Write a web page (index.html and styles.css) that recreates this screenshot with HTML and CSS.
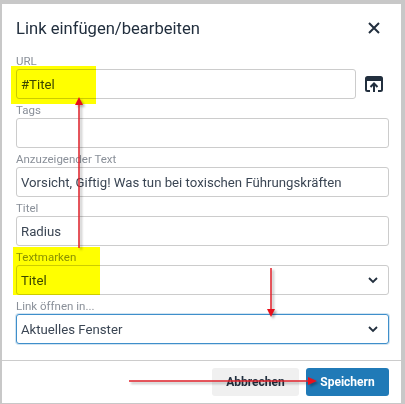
FILE: index.html
```html
<!DOCTYPE html>
<html lang="de">

<head>
    <meta charset="UTF-8">
    <meta name="viewport" content="width=device-width, initial-scale=1.0">
    <title>Link einfügen/bearbeiten</title>
    <link rel="stylesheet" href="styles.css">
</head>

<body>
    <div class="dialog">
        <div class="dialogHeader">
            <h1>Link einfügen/bearbeiten</h1>
            <svg class="closeIcon" width="24" height="24" viewBox="0 0 24 24">
                <path d="M7 7l10 10M17 7L7 17" />
            </svg>
        </div>

        <form class="dialogBody">
            <label for="url">URL</label>
            <div class="urlRow">
                <input type="text" id="url" value="#Titel">
                <svg class="uploadIcon" width="24" height="24" viewBox="0 0 24 24">
                    <path class="iconBox" d="M8 19H5.500A1.500 1.500 0 0 1 4 17.500V6.500A1.500 1.500 0 0 1 5.500 5h13A1.500 1.500 0 0 1 20 6.500v11a1.500 1.500 0 0 1-1.500 1.500H16" />
                    <path class="iconFill" d="M4 6.500A1.500 1.500 0 0 1 5.500 5h13A1.500 1.500 0 0 1 20 6.500V9H4z" />
                    <path class="iconArrow" d="M12 20v-8M8.500 15l3.500-3.500 3.500 3.500" />
                </svg>
            </div>

            <label for="tags">Tags</label>
            <input type="text" id="tags">

            <label for="text">Anzuzeigender Text</label>
            <input type="text" id="text" value="Vorsicht, Giftig! Was tun bei toxischen Führungskräften">

            <label for="titel">Titel</label>
            <input type="text" id="titel" value="Radius">

            <label for="marken">Textmarken</label>
            <div class="selectWrap">
                <select id="marken">
                    <option>Titel</option>
                </select>
                <svg class="chevron" width="10" height="7" viewBox="0 0 10 7"><path d="M1 1l4 4 4-4" /></svg>
            </div>

            <label for="ziel">Link öffnen in...</label>
            <div class="selectWrap">
                <select id="ziel" class="focused">
                    <option>Aktuelles Fenster</option>
                </select>
                <svg class="chevron" width="10" height="7" viewBox="0 0 10 7"><path d="M1 1l4 4 4-4" /></svg>
            </div>
        </form>

        <div class="dialogFooter">
            <button type="button" class="cancelBtn">Abbrechen</button>
            <button type="button" class="saveBtn">Speichern</button>
        </div>
    </div>

    <!-- annotations drawn on top of the screenshot -->
    <div class="marker markerUrl"></div>
    <div class="marker markerMarks"></div>
    <svg class="arrows" width="405" height="404" viewBox="0 0 405 404">
        <path class="arrowLine" d="M79 248V104M271 268v44M129 381h182" />
        <path class="arrowHead" d="M79 97l-4 8h8zM271 317l-4-8h8zM317 381l-9-4v8z" />
    </svg>
</body>

</html>
```

FILE: styles.css
```css
* {
    box-sizing: border-box;
}

body {
    margin: 0;
    width: 405px;
    height: 404px;
    padding: 4px 4px 1px 2px;
    background-color: #c8c8c8;
    font-family: Roboto, Arial, sans-serif;
    color: #222f3e;
    overflow: hidden;
}

.dialog {
    height: 399px;
    background-color: #fff;
    display: flex;
    flex-direction: column;
}

.dialogHeader {
    height: 40px;
    padding: 8px 15px 0 14px;
    display: flex;
    align-items: center;
    justify-content: space-between;
}

h1 {
    margin: 0;
    font-size: 16.600px;
    font-weight: 400;
}

.closeIcon path {
    fill: none;
    stroke: #222f3e;
    stroke-width: 2;
}

.dialogBody {
    flex: 1;
    padding: 6px 12px 0 14px;
    display: flex;
    flex-direction: column;
}

label {
    display: block;
    height: 19px;
    padding-top: 3px;
    line-height: 16px;
    font-size: 11.500px;
    color: #8a9099;
}

input[type="text"],
select {
    display: block;
    width: 100%;
    height: 30px;
    padding: 0 4px;
    border: 1px solid #ccc;
    border-radius: 3px;
    background-color: #fff;
    font-family: inherit;
    font-size: 13.200px;
    color: #3b4654;
    appearance: none;
    outline: none;
}

.urlRow {
    display: flex;
    align-items: center;
}

.urlRow input[type="text"] {
    flex: 1;
    width: auto;
    min-width: 0;
}

.uploadIcon {
    flex: none;
    margin: 0 3px 0 6px;
}

.iconBox {
    fill: none;
    stroke: #222f3e;
    stroke-width: 2;
}

.iconFill {
    fill: #222f3e;
}

.iconArrow {
    fill: none;
    stroke: #222f3e;
    stroke-width: 2;
}

.selectWrap {
    position: relative;
}

.focused {
    border-color: #3f8fcb;
    box-shadow: 0 0 0 1px rgba(32, 122, 183, 0.2);
}

.chevron {
    position: absolute;
    right: 11px;
    top: 12px;
}

.chevron path {
    fill: none;
    stroke: #222f3e;
    stroke-width: 1.800;
}

.dialogFooter {
    height: 43px;
    padding: 7px 12px 0 0;
    border-top: 1px solid #ccc;
    display: flex;
    justify-content: flex-end;
    gap: 7px;
}

button {
    height: 28px;
    border: none;
    border-radius: 3px;
    font-family: inherit;
    font-size: 12px;
    font-weight: 700;
}

.cancelBtn {
    width: 87px;
    background-color: #f0f0f0;
    color: #222f3e;
}

.saveBtn {
    width: 83px;
    background-color: #207ab7;
    color: #fff;
}

.marker {
    position: absolute;
    background-color: #ffff00;
    mix-blend-mode: multiply;
}

.markerUrl {
    left: 11px;
    top: 66px;
    width: 85px;
    height: 38px;
}

.markerMarks {
    left: 13px;
    top: 247px;
    width: 87px;
    height: 48px;
}

.arrows {
    position: absolute;
    left: 0;
    top: 0;
    filter: drop-shadow(2px 2px 1px rgba(0, 0, 0, 0.3));
}

.arrowLine {
    fill: none;
    stroke: #e0202a;
    stroke-width: 1.500;
}

.arrowHead {
    fill: #e8101c;
}
```
